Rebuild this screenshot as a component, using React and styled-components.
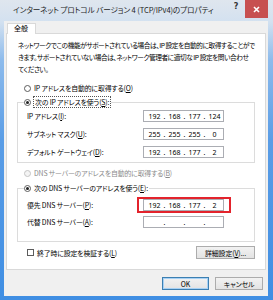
import React from 'react';
import styled, { createGlobalStyle } from 'styled-components';

const Global = createGlobalStyle`
  html, body { margin: 0; padding: 0; background: #fff; }
  body {
    font-family: "Noto Sans CJK JP", "Noto Sans", sans-serif;
    font-feature-settings: "palt";
    -webkit-font-smoothing: antialiased;
  }
  * { box-sizing: border-box; }
`;

const Window = styled.div`
  width: 273px;
  height: 300px;
  display: flex;
  flex-direction: column;
  padding: 0 5px 4px 4px;
  background: linear-gradient(to bottom, #dfe6ee 0px, #d3e1f0 22px, #8dbbec 60px, #5a9de6 140px, #3f8ee3 300px);
`;

const TitleBar = styled.div`
  height: 21px;
  display: flex;
  align-items: flex-start;
  flex: none;
`;

const Title = styled.div`
  flex: 1;
  padding: 4px 0 0 9px;
  font-size: 7.6px;
  line-height: 12px;
  letter-spacing: -0.1px;
  color: #1e1e1e;
  white-space: nowrap;
`;

const Help = styled.div`
  width: 12px;
  padding-top: 2px;
  margin-right: 3px;
  font-family: "DejaVu Sans", sans-serif;
  font-weight: bold;
  font-size: 8px;
  color: #333;
  text-align: center;
`;

const Close = styled.div`
  width: 23px;
  height: 18px;
  background: #c75050;
  color: #fff;
  display: flex;
  align-items: center;
  justify-content: center;
`;

const Client = styled.div`
  flex: 1;
  background: #f0f0f0;
  display: flex;
  flex-direction: column;
  padding: 2px 2px 0 2px;
`;

const Tabs = styled.div`
  display: flex;
  padding-left: 1px;
  height: 10px;
`;

const Tab = styled.div`
  width: 29px;
  height: 11px;
  background: #fff;
  border: 1px solid #d9d9d9;
  border-bottom: none;
  font-size: 7px;
  line-height: 9px;
  padding-left: 6px;
  color: #000;
  position: relative;
  z-index: 1;
`;

const Panel = styled.div`
  height: 237px;
  background: #fff;
  border: 1px solid #d9d9d9;
  display: flex;
  flex-direction: column;
  padding: 5px 10px 0 10px;
  font-size: 6.9px;
  letter-spacing: -0.15px;
  color: #000;
`;

const Desc = styled.div`
  line-height: 12px;
  padding-left: 1px;
  white-space: nowrap;
  font-size: 6.7px;
  letter-spacing: -0.45px;
`;

const Option = styled.label`
  display: flex;
  align-items: center;
  height: 12px;
  gap: 3px;
  padding-left: 7px;
  margin-top: ${p => p.$mt || 0}px;
  color: ${p => (p.$disabled ? '#8a8a8a' : '#000')};
  white-space: nowrap;
`;

const Radio = styled.span`
  width: 7px;
  height: 7px;
  border-radius: 50%;
  border: 1px solid ${p => (p.$disabled ? '#c4c4c4' : '#5c5c5c')};
  background: ${p => (p.$disabled ? '#f4f4f4' : '#fff')};
  display: flex;
  align-items: center;
  justify-content: center;
  flex: none;
  &::after {
    content: '';
    width: 3px;
    height: 3px;
    border-radius: 50%;
    background: ${p => (p.$checked ? '#222' : 'transparent')};
  }
`;

const Check = styled.span`
  width: 7px;
  height: 7px;
  border: 1px solid #5c5c5c;
  background: #fff;
  flex: none;
`;

const Focus = styled.span`
  outline: 1px dotted #555;
  outline-offset: 0px;
  padding: 0 1px;
`;

const Group = styled.fieldset`
  margin: ${p => p.$mt || 0}px 0 0 0;
  border: 1px solid #dcdcdc;
  padding: ${p => p.$pt}px 0 ${p => p.$pb}px 9px;
  display: flex;
  flex-direction: column;
  gap: ${p => p.$gap}px;
  min-width: 0;
`;

const Legend = styled.legend`
  padding: 0 1px 0 0;
  margin-left: -3px;
  display: flex;
  align-items: center;
  gap: 3px;
  height: 12px;
  white-space: nowrap;
`;

const Row = styled.div`
  display: flex;
  align-items: center;
  height: 12px;
`;

const Label = styled.div`
  width: 116px;
  white-space: nowrap;
`;

const Field = styled.div`
  width: 81px;
  height: 12px;
  border: 1px solid #abadb3;
  background: #fff;
  display: flex;
  align-items: center;
  padding-left: 2px;
  font-family: "Noto Sans", sans-serif;
  font-size: 7px;
  letter-spacing: 0;
  color: #000;
  position: relative;
  ${p =>
    p.$highlight &&
    `
    &::after {
      content: '';
      position: absolute;
      left: -7px; right: -8px; top: -3px; bottom: -3px;
      border: 2px solid #e3232c;
    }
  `}
`;

const Seg = styled.span`
  width: 17px;
  text-align: center;
`;

const Dot = styled.span`
  width: 3px;
  text-align: center;
`;

const Bottom = styled.div`
  display: flex;
  align-items: center;
  margin-top: 4px;
  padding-left: 10px;
`;

const CheckLabel = styled.label`
  display: flex;
  align-items: center;
  gap: 3px;
  flex: 1;
  white-space: nowrap;
`;

const Button = styled.div`
  width: ${p => p.$w}px;
  height: 13px;
  border: 1px solid ${p => (p.$default ? '#3c7fb1' : '#acacac')};
  background: linear-gradient(to bottom, #f2f2f2, #e3e3e3);
  box-shadow: ${p => (p.$default ? 'inset 0 0 0 1px #a7d1f5' : 'none')};
  display: flex;
  align-items: center;
  justify-content: center;
  font-size: 6.9px;
  letter-spacing: -0.1px;
  color: #000;
  white-space: nowrap;
`;

const Footer = styled.div`
  flex: 1;
  display: flex;
  justify-content: flex-end;
  align-items: flex-start;
  gap: 6px;
  padding: 7px 3px 0 0;
`;

const U = styled.span`
  text-decoration: underline;
`;

function IpField({ value, highlight }) {
  const parts = value ? value.split('.') : ['', '', '', ''];
  return (
    <Field $highlight={highlight}>
      {parts.map((p, i) => (
        <React.Fragment key={i}>
          <Seg>{p}</Seg>
          {i < 3 && <Dot>.</Dot>}
        </React.Fragment>
      ))}
    </Field>
  );
}

export default function App() {
  return (
    <>
      <Global />
      <Window>
        <TitleBar>
          <Title>インターネット プロトコル バージョン 4 (TCP/IPv4)のプロパティ</Title>
          <Help>?</Help>
          <Close>
            <svg width="7" height="7" viewBox="0 0 7 7">
              <path d="M1 1L6 6M6 1L1 6" stroke="#fff" strokeWidth="1.6" />
            </svg>
          </Close>
        </TitleBar>
        <Client>
          <Tabs>
            <Tab>全般</Tab>
          </Tabs>
          <Panel>
            <Desc>
              ネットワークでこの機能がサポートされている場合は、IP 設定を自動的に取得することがで
              <br />
              きます。サポートされていない場合は、ネットワーク管理者に適切な IP 設定を問い合わせ
              <br />
              てください。
            </Desc>
            <Option $mt={7}>
              <Radio />
              <span>IP アドレスを自動的に取得する(<U>O</U>)</span>
            </Option>
            <Group $mt={2} $pt={2} $pb={4} $gap={6}>
              <Legend>
                <Radio $checked />
                <Focus>次の IP アドレスを使う(<U>S</U>):</Focus>
              </Legend>
              <Row>
                <Label>IP アドレス(<U>I</U>):</Label>
                <IpField value="192.168.177.124" />
              </Row>
              <Row>
                <Label>サブネット マスク(<U>U</U>):</Label>
                <IpField value="255.255.255.0" />
              </Row>
              <Row>
                <Label>デフォルト ゲートウェイ(<U>D</U>):</Label>
                <IpField value="192.168.177.2" />
              </Row>
            </Group>
            <Option $mt={4} $disabled>
              <Radio $disabled />
              <span>DNS サーバーのアドレスを自動的に取得する(<U>B</U>)</span>
            </Option>
            <Group $mt={3} $pt={5} $pb={13} $gap={5}>
              <Legend>
                <Radio $checked />
                <span>次の DNS サーバーのアドレスを使う(<U>E</U>):</span>
              </Legend>
              <Row>
                <Label>優先 DNS サーバー(<U>P</U>):</Label>
                <IpField value="192.168.177.2" highlight />
              </Row>
              <Row>
                <Label>代替 DNS サーバー(<U>A</U>):</Label>
                <IpField />
              </Row>
            </Group>
            <Bottom>
              <CheckLabel>
                <Check />
                <span>終了時に設定を検証する(<U>L</U>)</span>
              </CheckLabel>
              <Button $w={59}>詳細設定(<U>V</U>)...</Button>
            </Bottom>
          </Panel>
          <Footer>
            <Button $w={47} $default>OK</Button>
            <Button $w={48}>キャンセル</Button>
          </Footer>
        </Client>
      </Window>
    </>
  );
}
